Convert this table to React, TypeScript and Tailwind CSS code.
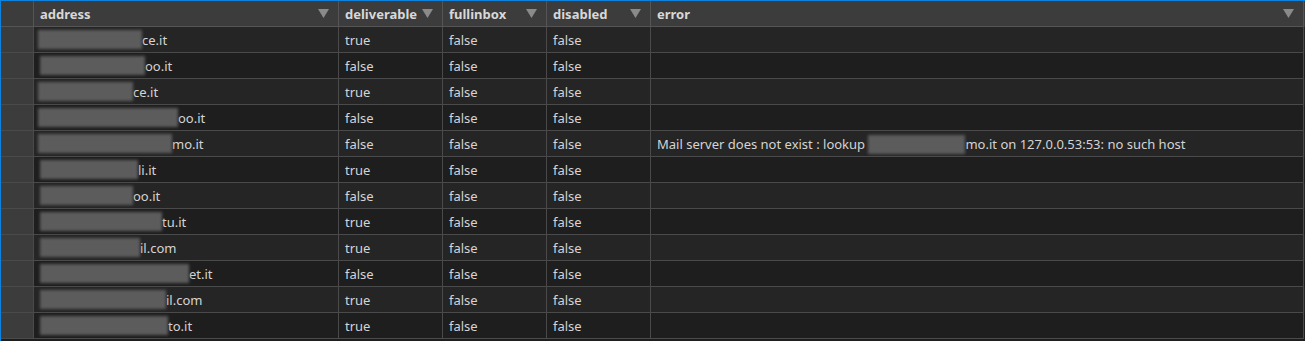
import React from "react";

type Row = { blur: number; addr: string; del: string; full: string; dis: string; err?: boolean; off?: number };

const rows: Row[] = [
  { blur: 104, addr: "ce.it", del: "true", full: "false", dis: "false", off: 0 },
  { blur: 105, addr: "oo.it", del: "false", full: "false", dis: "false", off: 2 },
  { blur: 95, addr: "ce.it", del: "true", full: "false", dis: "false", off: 0 },
  { blur: 140, addr: "oo.it", del: "false", full: "false", dis: "false", off: 0 },
  { blur: 134, addr: "mo.it", del: "false", full: "false", dis: "false", err: true, off: 0 },
  { blur: 98, addr: "li.it", del: "true", full: "false", dis: "false", off: 2 },
  { blur: 93, addr: "oo.it", del: "false", full: "false", dis: "false", off: 2 },
  { blur: 122, addr: "tu.it", del: "true", full: "false", dis: "false", off: 2 },
  { blur: 100, addr: "il.com", del: "true", full: "false", dis: "false", off: 2 },
  { blur: 149, addr: "et.it", del: "false", full: "false", dis: "false", off: 2 },
  { blur: 126, addr: "il.com", del: "true", full: "false", dis: "false", off: 2 },
  { blur: 128, addr: "to.it", del: "true", full: "false", dis: "false", off: 2 },
];

const Tri = () => (
  <svg width="11" height="9" viewBox="0 0 11 9" className="shrink-0">
    <polygon points="0,0 11,0 5.5,9" fill="#8a8a8a" />
  </svg>
);

const Blur = ({ w }: { w: number }) => (
  <span
    className="inline-block h-[19px] bg-[#5c5c5c] blur-[1.5px] shrink-0"
    style={{ width: w }}
  />
);

const H = ({ label, w, tight }: { label: string; w: string; tight?: boolean }) => (
  <div
    className={`${w} h-[26px] shrink-0 flex items-center border-r border-b border-[#555555] pl-[6px] pr-[9px] ${tight ? "gap-[5px]" : "justify-between"}`}
  >
    <span className="font-bold pt-[2px]">{label}</span>
    <Tri />
  </div>
);

const cell = "h-[26px] shrink-0 flex items-center border-r border-b border-[#4a4a4a] pl-[6px] pt-[2px]";

export default function App() {
  return (
    <div
      className="w-[1305px] h-[341px] overflow-hidden bg-[#1e1e1e] border-l border-t border-[#0a84e0] text-[13px] text-[#d4d4d4]"
      style={{ fontFamily: '"Noto Sans", "Open Sans", sans-serif' }}
    >
      <div className="flex bg-[#3c3c3c] text-[#d8d8d8]">
        <div className="w-[33px] h-[26px] shrink-0 border-r border-b border-[#555555]" />
        <H label="address" w="w-[305px]" />
        <H label="deliverable" w="w-[104px]" tight />
        <H label="fullinbox" w="w-[104px]" />
        <H label="disabled" w="w-[104px]" />
        <H label="error" w="w-[653px]" />
      </div>
      {rows.map((r, i) => (
        <div key={i} className={`flex ${i % 2 === 0 ? "bg-[#252525]" : "bg-[#1e1e1e]"}`}>
          <div className="w-[33px] h-[26px] shrink-0 bg-[#3c3c3c] border-r border-b border-[#4a4a4a]" />
          <div className="w-[305px] h-[26px] shrink-0 flex items-center border-r border-b border-[#4a4a4a] pl-[4px]">
            <span style={{ marginLeft: r.off }} className="flex items-center">
              <Blur w={r.blur} />
              <span className="pt-[2px]">{r.addr}</span>
            </span>
          </div>
          <div className={`w-[104px] ${cell}`}>{r.del}</div>
          <div className={`w-[104px] ${cell}`}>{r.full}</div>
          <div className={`w-[104px] ${cell}`}>{r.dis}</div>
          <div className={`w-[653px] ${cell} whitespace-nowrap`}>
            {r.err && (
              <>
                <span>Mail server does not exist : lookup&nbsp;</span>
                <Blur w={97} />
                <span>mo.it on 127.0.0.53:53: no such host</span>
              </>
            )}
          </div>
        </div>
      ))}
    </div>
  );
}
